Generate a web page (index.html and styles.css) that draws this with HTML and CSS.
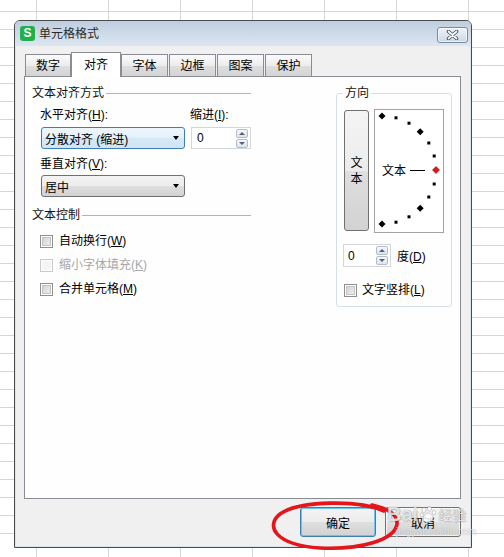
FILE: index.html
```html
<!DOCTYPE html>
<html lang="zh-CN">
<head>
    <meta charset="UTF-8">
    <meta name="viewport" content="width=device-width, initial-scale=1.0">
    <title>单元格格式</title>
    <link rel="stylesheet" href="styles.css">
</head>
<body>

<!-- Dialog window -->
<div class="dialog">
    <div class="titlebar">
        <span class="app-icon">S</span>
        <span class="title">单元格格式</span>
        <span class="close-btn">
            <svg width="13" height="10" viewBox="0 0 13 10">
                <path d="M2.5 1.5 L10.5 8.5 M10.5 1.5 L2.5 8.5" stroke="#43536a" stroke-width="3.6" stroke-linecap="round"/>
                <path d="M2.5 1.5 L10.5 8.5 M10.5 1.5 L2.5 8.5" stroke="#fff" stroke-width="1.7" stroke-linecap="round"/>
            </svg>
        </span>
    </div>

    <div class="dialog-body">
        <div class="tabs">
            <div class="tab first">数字</div>
            <div class="tab active">对齐</div>
            <div class="tab">字体</div>
            <div class="tab gap">边框</div>
            <div class="tab gap">图案</div>
            <div class="tab gap">保护</div>
        </div>

        <div class="panel">
            <!-- left column -->
            <div class="col-left">
                <div class="group-title">文本对齐方式</div>

                <div class="align-row first-row">
                    <div class="field wide">
                        <div class="label">水平对齐(<u>H</u>):</div>
                        <div class="select focused">分散对齐 (缩进)</div>
                    </div>
                    <div class="field narrow">
                        <div class="label">缩进(<u>I</u>):</div>
                        <div class="spin">
                            <span>0</span>
                            <span class="spin-btns"><i class="up"></i><i class="down"></i></span>
                        </div>
                    </div>
                </div>

                <div class="align-row second-row">
                    <div class="field wide">
                        <div class="label">垂直对齐(<u>V</u>):</div>
                        <div class="select">居中</div>
                    </div>
                </div>

                <div class="group-title second">文本控制</div>

                <div class="checks">
                    <div class="check"><span class="cb"></span>自动换行(<u>W</u>)</div>
                    <div class="check disabled"><span class="cb"></span>缩小字体填充(<u>K</u>)</div>
                    <div class="check"><span class="cb"></span>合并单元格(<u>M</u>)</div>
                </div>
            </div>

            <!-- direction group -->
            <fieldset class="direction">
                <legend>方向</legend>
                <div class="dir-row">
                    <div class="vtext-btn"><span>文</span><span>本</span></div>
                    <div class="dial">
                        <svg width="68" height="122" viewBox="0 0 68 122">
                            <g fill="#000">
                                <polygon points="7,2.5 10.5,6 7,9.5 3.5,6"/>
                                <polygon points="45.2,18.3 48.7,21.8 45.2,25.3 41.7,21.8"/>
                                <polygon points="45.2,94.7 48.7,98.2 45.2,101.7 41.7,98.2"/>
                                <polygon points="7,110.5 10.5,114 7,117.5 3.5,114"/>
                                <rect x="19.5" y="6.3" width="3" height="3"/>
                                <rect x="32.5" y="11.7" width="3" height="3"/>
                                <rect x="52.3" y="31.5" width="3" height="3"/>
                                <rect x="57.7" y="44.5" width="3" height="3"/>
                                <rect x="57.7" y="72.5" width="3" height="3"/>
                                <rect x="52.3" y="85.5" width="3" height="3"/>
                                <rect x="32.5" y="105.3" width="3" height="3"/>
                                <rect x="19.5" y="110.7" width="3" height="3"/>
                            </g>
                            <polygon points="61,56.5 64.5,60 61,63.5 57.5,60" fill="#e8141c" stroke="#8a0000" stroke-width="0.6"/>
                            <text x="7" y="64.5" font-size="12" font-family="Noto Sans CJK SC, sans-serif">文本</text>
                            <line x1="35" y1="60.5" x2="50" y2="60.5" stroke="#000" stroke-width="1"/>
                        </svg>
                    </div>
                </div>
                <div class="degree-row">
                    <div class="spin small">
                        <span>0</span>
                        <span class="spin-btns"><i class="up"></i><i class="down"></i></span>
                    </div>
                    <span class="degree-label">度(<u>D</u>)</span>
                </div>
                <div class="check vertical-check"><span class="cb"></span>文字竖排(<u>L</u>)</div>
            </fieldset>
        </div>

        <div class="buttons">
            <button class="btn default">确定</button>
            <button class="btn">取消</button>
        </div>
    </div>
</div>

<!-- red hand-drawn mark -->
<svg class="mark" width="504" height="557" viewBox="0 0 504 557">
    <path d="M384 511 C360 500, 300 500, 280 514 C265 526, 275 545, 320 548 C360 550, 395 540, 397 524 C398 515, 390 509, 372 505"
          fill="none" stroke="#e3161b" stroke-width="3.6" stroke-linecap="round"/>
</svg>

<!-- watermark -->
<div class="watermark">
    <div class="wm-logo">
        <span>Bai</span>
        <svg width="16" height="17" viewBox="0 0 16 17">
            <g fill="rgba(255,255,255,0.8)" stroke="rgba(120,120,120,0.45)" stroke-width="0.8">
                <ellipse cx="4" cy="4" rx="2" ry="2.6"/>
                <ellipse cx="9.5" cy="2.8" rx="2" ry="2.5"/>
                <ellipse cx="14" cy="6.5" rx="1.8" ry="2.3"/>
                <ellipse cx="1.8" cy="9" rx="1.6" ry="2.1"/>
                <path d="M8 7 C12 7, 15 13, 11 15.5 C9 16.5, 6 16.5, 4.5 15.5 C1.5 13.5, 4.5 7, 8 7 Z"/>
            </g>
        </svg>
        <span class="wm-cn">经验</span>
    </div>
    <div class="wm-url">jingyan.baidu.com</div>
</div>

</body>
</html>
```

FILE: styles.css
```css
* {
    box-sizing: border-box;
}

body {
    margin: 0;
    padding: 20px 0 0 14px;
    font-family: "Liberation Sans", "Noto Sans CJK SC", sans-serif;
    font-size: 12px;
    color: #000;
    background-color: #fff;
    /* spreadsheet grid behind the dialog */
    background-image:
        repeating-linear-gradient(to right, transparent 0, transparent 36px, #d6d6d6 36px, #d6d6d6 37px, transparent 37px, transparent 72px),
        repeating-linear-gradient(to bottom, transparent 0, transparent 11px, #d6d6d6 11px, #d6d6d6 12px, transparent 12px, transparent 18px);
}

u {
    text-decoration: underline;
}

/* ---------- dialog frame ---------- */
.dialog {
    width: 458px;
    height: 528px;
    border: 1px solid #4a4a4a;
    border-radius: 6px 6px 0 0;
    background: #f0f0f0;
    display: flex;
    flex-direction: column;
    overflow: hidden;
}

.titlebar {
    height: 25px;
    flex: none;
    display: flex;
    align-items: center;
    padding: 0 3px 0 5px;
    background: linear-gradient(#bfcee0, #dce6f1);
}

.app-icon {
    width: 15px;
    height: 15px;
    border-radius: 3px;
    background: #21b04b;
    color: #fff;
    font-weight: bold;
    font-size: 12px;
    line-height: 15px;
    text-align: center;
}

.title {
    flex: 1;
    margin-left: 4px;
    color: #2a2a2a;
    line-height: 16px;
}

.close-btn {
    width: 31px;
    height: 16px;
    margin-top: 2px;
    border: 1px solid #7a8ba1;
    border-radius: 3px;
    background: linear-gradient(#eef3f8, #cdd8e5);
    box-shadow: inset 0 0 0 1px rgba(255, 255, 255, 0.6);
    display: flex;
    align-items: center;
    justify-content: center;
}

.dialog-body {
    flex: 1;
    padding: 6px 10px 0 9px;
    box-shadow: inset 1px 0 #dbe4ee, inset -1px 0 #dbe4ee, inset 0 -1px #dbe4ee;
}

/* ---------- tabs ---------- */
.tabs {
    display: flex;
    align-items: flex-end;
    height: 24px;
    padding-left: 1px;
}

.tab {
    width: 47px;
    height: 22px;
    padding-top: 3px;
    text-align: center;
    line-height: 16px;
    border: 1px solid #898c95;
    border-bottom: none;
    background: linear-gradient(#fbfbfb, #ececec 50%, #dedede 51%, #d4d4d4);
}

.tab.first {
    width: 46px;
}

.tab.gap {
    margin-left: 1px;
}

.tab.active {
    width: 50px;
    height: 25px;
    padding-top: 4px;
    margin-bottom: -1px;
    background: #fff;
    position: relative;
    z-index: 1;
}

/* ---------- panel ---------- */
.panel {
    height: 423px;
    border: 1px solid #898c95;
    background: #fefefe;
    display: flex;
    justify-content: space-between;
    align-items: flex-start;
    padding: 8px 8px 0 7px;
}

.col-left {
    width: 219px;
}

.group-title {
    display: flex;
    align-items: center;
    line-height: 16px;
    color: #111;
}

.group-title::after {
    content: "";
    flex: 1;
    margin-left: 2px;
    border-top: 1px solid #b4b4b4;
}

.group-title.second {
    margin-top: 10px;
}

.align-row {
    display: flex;
    gap: 6px;
    padding-left: 9px;
}

.first-row {
    margin-top: 6px;
}

.first-row .label + * {
    margin-top: 4px;
}

.second-row {
    margin-top: 7px;
}

.second-row .label + * {
    margin-top: 3px;
}

.field.wide {
    width: 144px;
}

.field.narrow {
    width: 60px;
}

.label {
    line-height: 16px;
    margin-left: -1px;
}

.select {
    height: 22px;
    display: flex;
    align-items: center;
    padding-left: 3px;
    border: 1px solid #707070;
    border-radius: 3px;
    background: linear-gradient(#f4f4f4, #ececec 50%, #dedede 51%, #d2d2d2);
}

.select.focused {
    border-color: #3c7fb1;
    background: linear-gradient(#eef6fc, #e3f0fa 50%, #d6e9f7 51%, #cfe4f5);
}

.select::after {
    content: "";
    margin-left: auto;
    margin-right: 5px;
    border-left: 3.5px solid transparent;
    border-right: 3.5px solid transparent;
    border-top: 4px solid #000;
}

.spin {
    height: 22px;
    display: flex;
    align-items: center;
    padding-left: 5px;
    border: 1px solid #d3d7dd;
    background: #fff;
}

.spin.small {
    width: 48px;
    height: 23px;
    padding-left: 4px;
}

.spin-btns {
    margin-left: auto;
    margin-right: 2px;
    display: flex;
    flex-direction: column;
    gap: 1px;
}

.spin-btns i {
    width: 12px;
    height: 9px;
    border: 1px solid #b3bdca;
    border-radius: 2px;
    background: linear-gradient(#f6f8fb, #dce4ed);
    display: flex;
    align-items: center;
    justify-content: center;
}

.spin-btns .up::after {
    content: "";
    border-left: 3px solid transparent;
    border-right: 3px solid transparent;
    border-bottom: 3px solid #4f6078;
}

.spin-btns .down::after {
    content: "";
    border-left: 3px solid transparent;
    border-right: 3px solid transparent;
    border-top: 3px solid #4f6078;
}

/* ---------- checkboxes ---------- */
.checks {
    margin-top: 10px;
    padding-left: 8px;
    display: flex;
    flex-direction: column;
    gap: 8px;
}

.check {
    display: flex;
    align-items: center;
    line-height: 16px;
}

.cb {
    width: 13px;
    height: 13px;
    margin-right: 6px;
    border: 1px solid #8e8f8f;
    background: linear-gradient(135deg, #cdcdcd, #f5f5f5);
    box-shadow: inset 0 0 0 1px #fff, inset 0 0 0 2px #c4c4c4;
}

.check.disabled {
    color: #a6a6a6;
}

.check.disabled .cb {
    border-color: #c9c9c9;
    background: #f4f4f4;
    box-shadow: inset 0 0 0 1px #fff;
}

/* ---------- direction group ---------- */
.direction {
    width: 116px;
    min-width: 0;
    margin: 0;
    padding: 8px 6px 8px 6px;
    border: 1px solid #d5dfe5;
    border-radius: 3px;
}

.direction legend {
    padding: 0 2px;
    line-height: 16px;
    color: #111;
}

.dir-row {
    display: flex;
    align-items: flex-start;
    gap: 5px;
}

.vtext-btn {
    width: 25px;
    height: 121px;
    margin: 1px 0 0 1px;
    border: 1px solid #707070;
    border-radius: 3px;
    background: linear-gradient(#f4f4f4, #ececec 50%, #dedede 51%, #d2d2d2);
    display: flex;
    flex-direction: column;
    align-items: center;
    justify-content: center;
    line-height: 16px;
}

.dial {
    width: 70px;
    height: 124px;
    border: 1px solid #a3a3a3;
    background: #fff;
}

.dial svg {
    display: block;
}

.degree-row {
    margin-top: 11px;
    display: flex;
    align-items: center;
}

.degree-label {
    margin-left: 6px;
}

.vertical-check {
    margin-top: 15px;
    padding-left: 1px;
}

.vertical-check .cb {
    margin-right: 5px;
}

/* ---------- bottom buttons ---------- */
.buttons {
    display: flex;
    justify-content: flex-end;
    gap: 9px;
    padding-top: 8px;
}

.btn {
    width: 76px;
    height: 30px;
    font: inherit;
    color: #000;
    border: 1px solid #707070;
    border-radius: 3px;
    background: linear-gradient(#f4f4f4, #ececec 50%, #dedede 51%, #d2d2d2);
    box-shadow: inset 0 0 0 1px rgba(255, 255, 255, 0.7);
}

.btn.default {
    border-color: #3c7fb1;
    box-shadow: inset 0 0 0 1px #6cc3f0;
}

/* ---------- overlays ---------- */
.mark {
    position: absolute;
    left: 0;
    top: 0;
    pointer-events: none;
}

.watermark {
    position: absolute;
    left: 387px;
    top: 503px;
    pointer-events: none;
}

.wm-logo {
    display: flex;
    align-items: center;
    gap: 2px;
    font-family: "Liberation Sans", sans-serif;
    font-weight: bold;
    font-size: 20px;
    line-height: 22px;
    color: rgba(255, 255, 255, 0.8);
    text-shadow: 0 0 1px rgba(0, 0, 0, 0.45), 1px 1px 1px rgba(0, 0, 0, 0.15);
}

.wm-cn {
    font-family: "Noto Sans CJK SC", sans-serif;
    font-size: 14px;
    font-weight: normal;
}

.wm-url {
    margin: 1px 0 0 9px;
    font-size: 10px;
    line-height: 12px;
    color: rgba(255, 255, 255, 0.7);
    text-shadow: 0 0 1px rgba(0, 0, 0, 0.3);
}
```
